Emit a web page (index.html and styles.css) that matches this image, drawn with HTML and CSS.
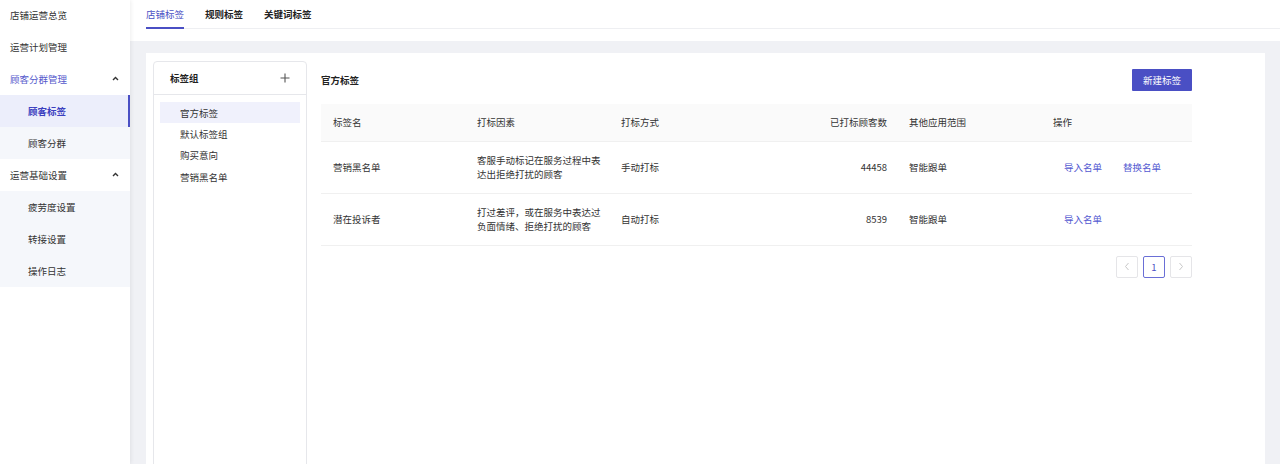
FILE: index.html
```html
<!DOCTYPE html>
<html lang="zh-CN">
<head>
<meta charset="utf-8">
<title>顾客标签</title>
<link rel="stylesheet" href="styles.css">
</head>
<body>
<div class="app">
  <aside class="sidebar">
    <ul class="menu">
      <li class="menu-item">店铺运营总览</li>
      <li class="menu-item">运营计划管理</li>
      <li class="menu-item open">顾客分群管理
        <svg class="caret" width="7" height="5" viewBox="0 0 7 5"><polyline points="1,4 3.5,1.5 6,4" fill="none" stroke="#333" stroke-width="1.4"/></svg>
      </li>
      <li>
        <ul class="submenu">
          <li class="sub-item selected">顾客标签</li>
          <li class="sub-item">顾客分群</li>
        </ul>
      </li>
      <li class="menu-item">运营基础设置
        <svg class="caret" width="7" height="5" viewBox="0 0 7 5"><polyline points="1,4 3.5,1.5 6,4" fill="none" stroke="#333" stroke-width="1.4"/></svg>
      </li>
      <li>
        <ul class="submenu">
          <li class="sub-item">疲劳度设置</li>
          <li class="sub-item">转接设置</li>
          <li class="sub-item">操作日志</li>
        </ul>
      </li>
    </ul>
  </aside>
  <main class="main">
    <header class="topbar">
      <nav class="tabs">
        <span class="tab active">店铺标签</span>
        <span class="tab">规则标签</span>
        <span class="tab">关键词标签</span>
      </nav>
    </header>
    <div class="content">
      <div class="card">
        <div class="group-panel">
          <div class="group-head">
            <span class="group-title">标签组</span>
            <svg class="plus" width="10" height="10" viewBox="0 0 10 10"><path d="M5 0.5V9.5M0.5 5H9.5" stroke="#555" stroke-width="1.1" fill="none"/></svg>
          </div>
          <ul class="group-list">
            <li class="group-item selected">官方标签</li>
            <li class="group-item">默认标签组</li>
            <li class="group-item">购买意向</li>
            <li class="group-item">营销黑名单</li>
          </ul>
        </div>
        <section class="tag-section">
          <div class="section-head">
            <h2 class="section-title">官方标签</h2>
            <button class="btn-primary">新建标签</button>
          </div>
          <table class="tag-table">
            <colgroup>
              <col class="c1"><col class="c2"><col class="c3"><col class="c4"><col class="c5"><col class="c6">
            </colgroup>
            <thead>
              <tr>
                <th>标签名</th>
                <th>打标因素</th>
                <th>打标方式</th>
                <th class="num">已打标顾客数</th>
                <th>其他应用范围</th>
                <th>操作</th>
              </tr>
            </thead>
            <tbody>
              <tr>
                <td>营销黑名单</td>
                <td>客服手动标记在服务过程中表<br>达出拒绝打扰的顾客</td>
                <td>手动打标</td>
                <td class="num">44458</td>
                <td>智能跟单</td>
                <td class="ops"><a class="link">导入名单</a><a class="link">替换名单</a></td>
              </tr>
              <tr>
                <td>潜在投诉者</td>
                <td>打过差评，或在服务中表达过<br>负面情绪、拒绝打扰的顾客</td>
                <td>自动打标</td>
                <td class="num">8539</td>
                <td>智能跟单</td>
                <td class="ops"><a class="link">导入名单</a></td>
              </tr>
            </tbody>
          </table>
          <div class="pager">
            <span class="page-btn disabled"><svg width="6" height="9" viewBox="0 0 6 9"><polyline points="4.5,1 1.5,4.5 4.5,8" fill="none" stroke="#c8c8c8" stroke-width="1"/></svg></span>
            <span class="page-btn current">1</span>
            <span class="page-btn disabled"><svg width="6" height="9" viewBox="0 0 6 9"><polyline points="1.5,1 4.5,4.5 1.5,8" fill="none" stroke="#c8c8c8" stroke-width="1"/></svg></span>
          </div>
        </section>
      </div>
    </div>
  </main>
</div>
</body>
</html>
```

FILE: styles.css
```css
* { box-sizing: border-box; }
html, body {
  margin: 0;
  padding: 0;
  height: 100%;
  overflow: hidden;
}
body {
  font-family: "Noto Sans CJK SC", "Noto Sans", sans-serif;
  font-size: 9.5px;
  color: #333;
  background: #fff;
}
ul { list-style: none; margin: 0; padding: 0; }

.app {
  display: flex;
  height: 100vh;
}

/* Sidebar */
.sidebar {
  width: 130px;
  flex: none;
  background: #fff;
  box-shadow: 1px 0 4px rgba(0, 0, 0, 0.07);
  position: relative;
  z-index: 1;
}
.menu { margin-top: -1px; }
.menu-item {
  height: 32px;
  display: flex;
  align-items: center;
  justify-content: space-between;
  padding: 0 11px 0 10px;
  color: #333;
}
.menu-item.open { color: #5559cc; }
.caret { display: block; margin-top: -1px; }
.submenu { background: #f5f7fb; }
.sub-item {
  height: 32px;
  display: flex;
  align-items: center;
  padding-left: 28px;
  color: #333;
}
.sub-item.selected {
  background: #eceefb;
  color: #3b40bf;
  font-weight: 600;
  border-right: 2px solid #4a4fc4;
}

/* Main */
.main {
  flex: 1;
  display: flex;
  flex-direction: column;
  min-width: 0;
  background: #f0f1f5;
}
.topbar {
  background: #fff;
  padding: 0 0 12px 16px;
}
.tabs {
  display: flex;
  gap: 21px;
  height: 29px;
  border-bottom: 1px solid #eeeff2;
}
.tab {
  display: flex;
  align-items: center;
  color: #222;
  font-weight: 600;
  border-bottom: 2px solid transparent;
  margin-bottom: -1px;
}
.tab.active {
  color: #4a4fc4;
  font-weight: 400;
  border-bottom-color: #4a4fc4;
}

.content {
  flex: 1;
  padding: 12px 15px 0 16px;
}
.card {
  background: #fff;
  display: flex;
  gap: 14px;
  padding: 8px 73px 0 7px;
  height: 460px;
}

/* Group panel */
.group-panel {
  width: 154px;
  flex: none;
  border: 1px solid #e6e7eb;
  border-radius: 4px;
}
.group-head {
  height: 33px;
  display: flex;
  align-items: center;
  justify-content: space-between;
  padding: 0 16px 0 16px;
  border-bottom: 1px solid #e6e7eb;
}
.group-title { font-weight: 600; color: #222; }
.plus { display: block; }
.group-list { padding: 7px 6px; }
.group-item {
  height: 21.4px;
  display: flex;
  align-items: center;
  padding-left: 20px;
  color: #333;
}
.group-item.selected { background: #f0f1fc; }

/* Right section */
.tag-section { flex: 1; min-width: 0; }
.section-head {
  display: flex;
  align-items: center;
  justify-content: space-between;
  padding-top: 8px;
  margin-bottom: 13px;
}
.section-title {
  margin: 0;
  font-size: 9.5px;
  font-weight: 600;
  color: #222;
}
.btn-primary {
  width: 60px;
  height: 22px;
  border: none;
  border-radius: 1px;
  background: #4a4fc4;
  color: #fff;
  font-family: inherit;
  font-size: 9.5px;
  padding: 0;
}

.tag-table {
  width: 100%;
  table-layout: fixed;
  border-collapse: collapse;
}
.c1, .c2, .c3, .c4, .c5 { width: 144px; }
.tag-table th {
  height: 37px;
  background: #fafafa;
  text-align: left;
  font-weight: 400;
  color: #333;
  padding: 0 12px;
  border-bottom: 1px solid #f0f0f0;
  white-space: nowrap;
}
.tag-table td {
  height: 52px;
  padding: 0 12px;
  line-height: 14.5px;
  border-bottom: 1px solid #f0f0f0;
  color: #333;
  white-space: nowrap;
}
.tag-table .num { text-align: right; padding-right: 10px; }
.tag-table td.ops { padding-left: 23px; }
.link {
  color: #5359d1;
  margin-right: 21px;
  cursor: pointer;
}

.pager {
  display: flex;
  justify-content: flex-end;
  gap: 5px;
  margin-top: 10px;
}
.page-btn {
  width: 22px;
  height: 22px;
  border: 1px solid #e5e5e8;
  border-radius: 2px;
  display: flex;
  align-items: center;
  justify-content: center;
  color: #4a4fc4;
}
.page-btn.current { border-color: #6a6fd6; }
.page-btn svg { display: block; }
```
